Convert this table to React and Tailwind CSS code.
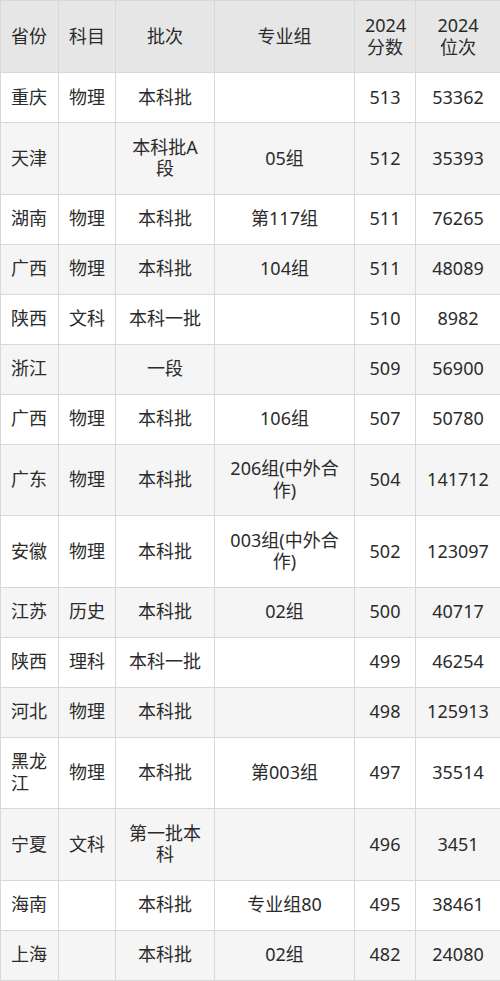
const rows = [
  ['重庆', '物理', '本科批', '', '513', '53362'],
  ['天津', '', '本科批A段', '05组', '512', '35393'],
  ['湖南', '物理', '本科批', '第117组', '511', '76265'],
  ['广西', '物理', '本科批', '104组', '511', '48089'],
  ['陕西', '文科', '本科一批', '', '510', '8982'],
  ['浙江', '', '一段', '', '509', '56900'],
  ['广西', '物理', '本科批', '106组', '507', '50780'],
  ['广东', '物理', '本科批', '206组(中外合作)', '504', '141712'],
  ['安徽', '物理', '本科批', '003组(中外合作)', '502', '123097'],
  ['江苏', '历史', '本科批', '02组', '500', '40717'],
  ['陕西', '理科', '本科一批', '', '499', '46254'],
  ['河北', '物理', '本科批', '', '498', '125913'],
  ['黑龙江', '物理', '本科批', '第003组', '497', '35514'],
  ['宁夏', '文科', '第一批本科', '', '496', '3451'],
  ['海南', '', '本科批', '专业组80', '495', '38461'],
  ['上海', '', '本科批', '02组', '482', '24080'],
]

const headers = ['省份', '科目', '批次', '专业组', '2024分数', '2024位次']

export default function App() {
  return (
    <div className="w-[500px] bg-white font-['Noto_Sans','Noto_Sans_CJK_SC',sans-serif] text-[18px] leading-[21.5px] text-[#2b2b2b]">
      <table className="w-[500px] table-fixed border-collapse">
        <colgroup>
          <col className="w-[58px]" />
          <col className="w-[57px]" />
          <col className="w-[99px]" />
          <col className="w-[140px]" />
          <col className="w-[61px]" />
          <col className="w-[85px]" />
        </colgroup>
        <thead>
          <tr className="bg-[#e6e6e6]">
            {headers.map((h, i) => (
              <th
                key={i}
                className={`border border-[#d8d8d8] px-[10px] py-[14px] font-normal ${i === 0 ? 'text-left' : 'text-center'}`}
              >
                {i >= 4 ? (
                  <>
                    {h.slice(0, 4)}
                    <br />
                    {h.slice(4)}
                  </>
                ) : (
                  h
                )}
              </th>
            ))}
          </tr>
        </thead>
        <tbody>
          {rows.map((r, ri) => (
            <tr key={ri} className={ri % 2 === 0 ? 'bg-white' : 'bg-[#f5f5f5]'}>
              {r.map((c, ci) => (
                <td
                  key={ci}
                  className={`border border-[#d8d8d8] px-[10px] py-[13.75px] break-all ${ci === 0 ? 'text-left' : 'text-center'}`}
                >
                  {c}
                </td>
              ))}
            </tr>
          ))}
        </tbody>
      </table>
    </div>
  )
}
